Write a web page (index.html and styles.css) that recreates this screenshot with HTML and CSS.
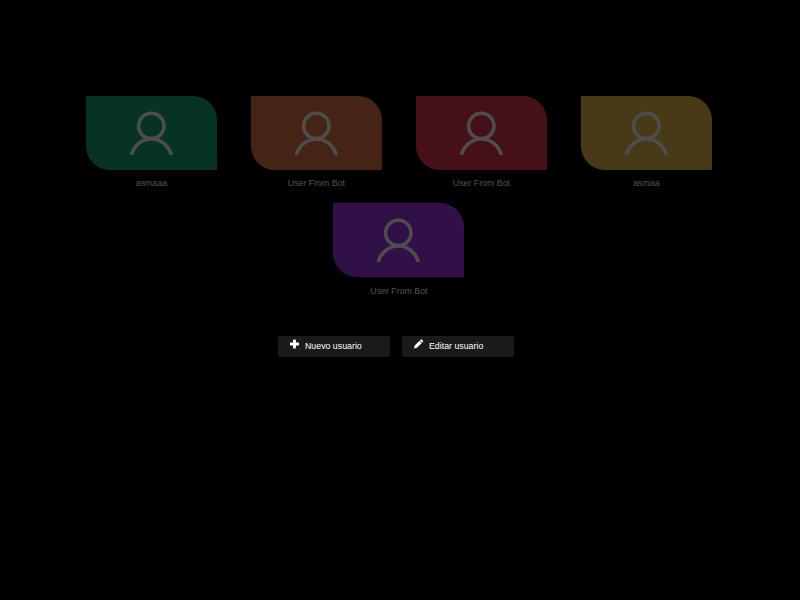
FILE: index.html
```html
<!DOCTYPE html>
<html lang="es">
<head>
<meta charset="utf-8">
<title>Usuarios</title>
<link rel="stylesheet" href="styles.css">
</head>
<body>
<svg width="0" height="0" class="defs">
  <symbol id="person" viewBox="0 0 44 45">
    <g fill="none" stroke="#fff" stroke-width="3.6">
      <circle cx="22.3" cy="15.9" r="12.7"/>
      <path d="M2.1 46A20.6 21.2 0 0 1 42.5 46"/>
    </g>
  </symbol>
</svg>
<main class="users">
  <div class="user"><div class="card green"><svg class="person"><use href="#person"/></svg></div><div class="name">asmaaa</div></div>
  <div class="user"><div class="card orange"><svg class="person"><use href="#person"/></svg></div><div class="name">User From Bot</div></div>
  <div class="user"><div class="card red"><svg class="person"><use href="#person"/></svg></div><div class="name">User From Bot</div></div>
  <div class="user"><div class="card gold"><svg class="person"><use href="#person"/></svg></div><div class="name">asmaa</div></div>
  <div class="user"><div class="card purple"><svg class="person"><use href="#person"/></svg></div><div class="name">User From Bot</div></div>
</main>
<div class="actions">
  <button class="action" type="button">
    <svg class="icon" viewBox="0 0 10 10"><path d="M3.6 1.1Q3.6.4 4.3.4H5.7Q6.4.4 6.4 1.1V3.6H8.9Q9.6 3.6 9.6 4.3V5.7Q9.6 6.4 8.9 6.4H6.4V8.9Q6.4 9.6 5.7 9.6H4.3Q3.6 9.6 3.6 8.9V6.4H1.1Q.4 6.4.4 5.7V4.3Q.4 3.6 1.1 3.6H3.6Z"/></svg>
    <span>Nuevo usuario</span>
  </button>
  <button class="action" type="button">
    <svg class="icon" viewBox="0 0 10 10"><path d="M.4 9.6 1.2 6.6 6.1 1.7 8.3 3.9 3.4 8.8ZM6.5 1.3 7.3.5Q7.8 0 8.3.5L9.5 1.7Q10 2.2 9.5 2.7L8.7 3.5Z"/></svg>
    <span>Editar usuario</span>
  </button>
</div>
</body>
</html>
```
FILE: styles.css
```css
* { box-sizing: border-box; }
body {
  margin: 0;
  padding-top: 96px;
  min-height: 600px;
  background: #000;
  color: #fff;
  font: 8.8px/12px "Liberation Sans", Arial, sans-serif;
}
.defs { display: none; }
.users {
  display: flex;
  flex-wrap: wrap;
  justify-content: center;
  gap: 0 34px;
  width: 626px;
  margin-left: 85.9px;
  opacity: .3;
}
.user { width: 131px; height: 107.4px; }
.card {
  height: 74px;
  padding-top: 14px;
  border-radius: 0 24px 0 24px;
}
.green { background: #14aa78; }
.orange { background: #e37846; }
.red { background: #e63550; }
.gold { background: #f0c14d; }
.purple { background: #a035e6; }
.person {
  display: block;
  width: 44px;
  height: 45px;
  margin-left: 43px;
}
.name { margin-top: 7.3px; text-align: center; }
.actions {
  display: flex;
  gap: 12px;
  margin: 25.2px 0 0 278px;
}
.action {
  display: flex;
  align-items: flex-start;
  width: 112px;
  height: 21px;
  padding: 4px 12px 4px 11px;
  border: 0;
  border-radius: 2px;
  background: #1a1a1a;
  color: #fff;
  font: inherit;
}
.icon {
  width: 10px;
  height: 10px;
  margin: -1px 5px 0 1px;
  fill: #fff;
  transform: translateX(-.5px);
}
```
